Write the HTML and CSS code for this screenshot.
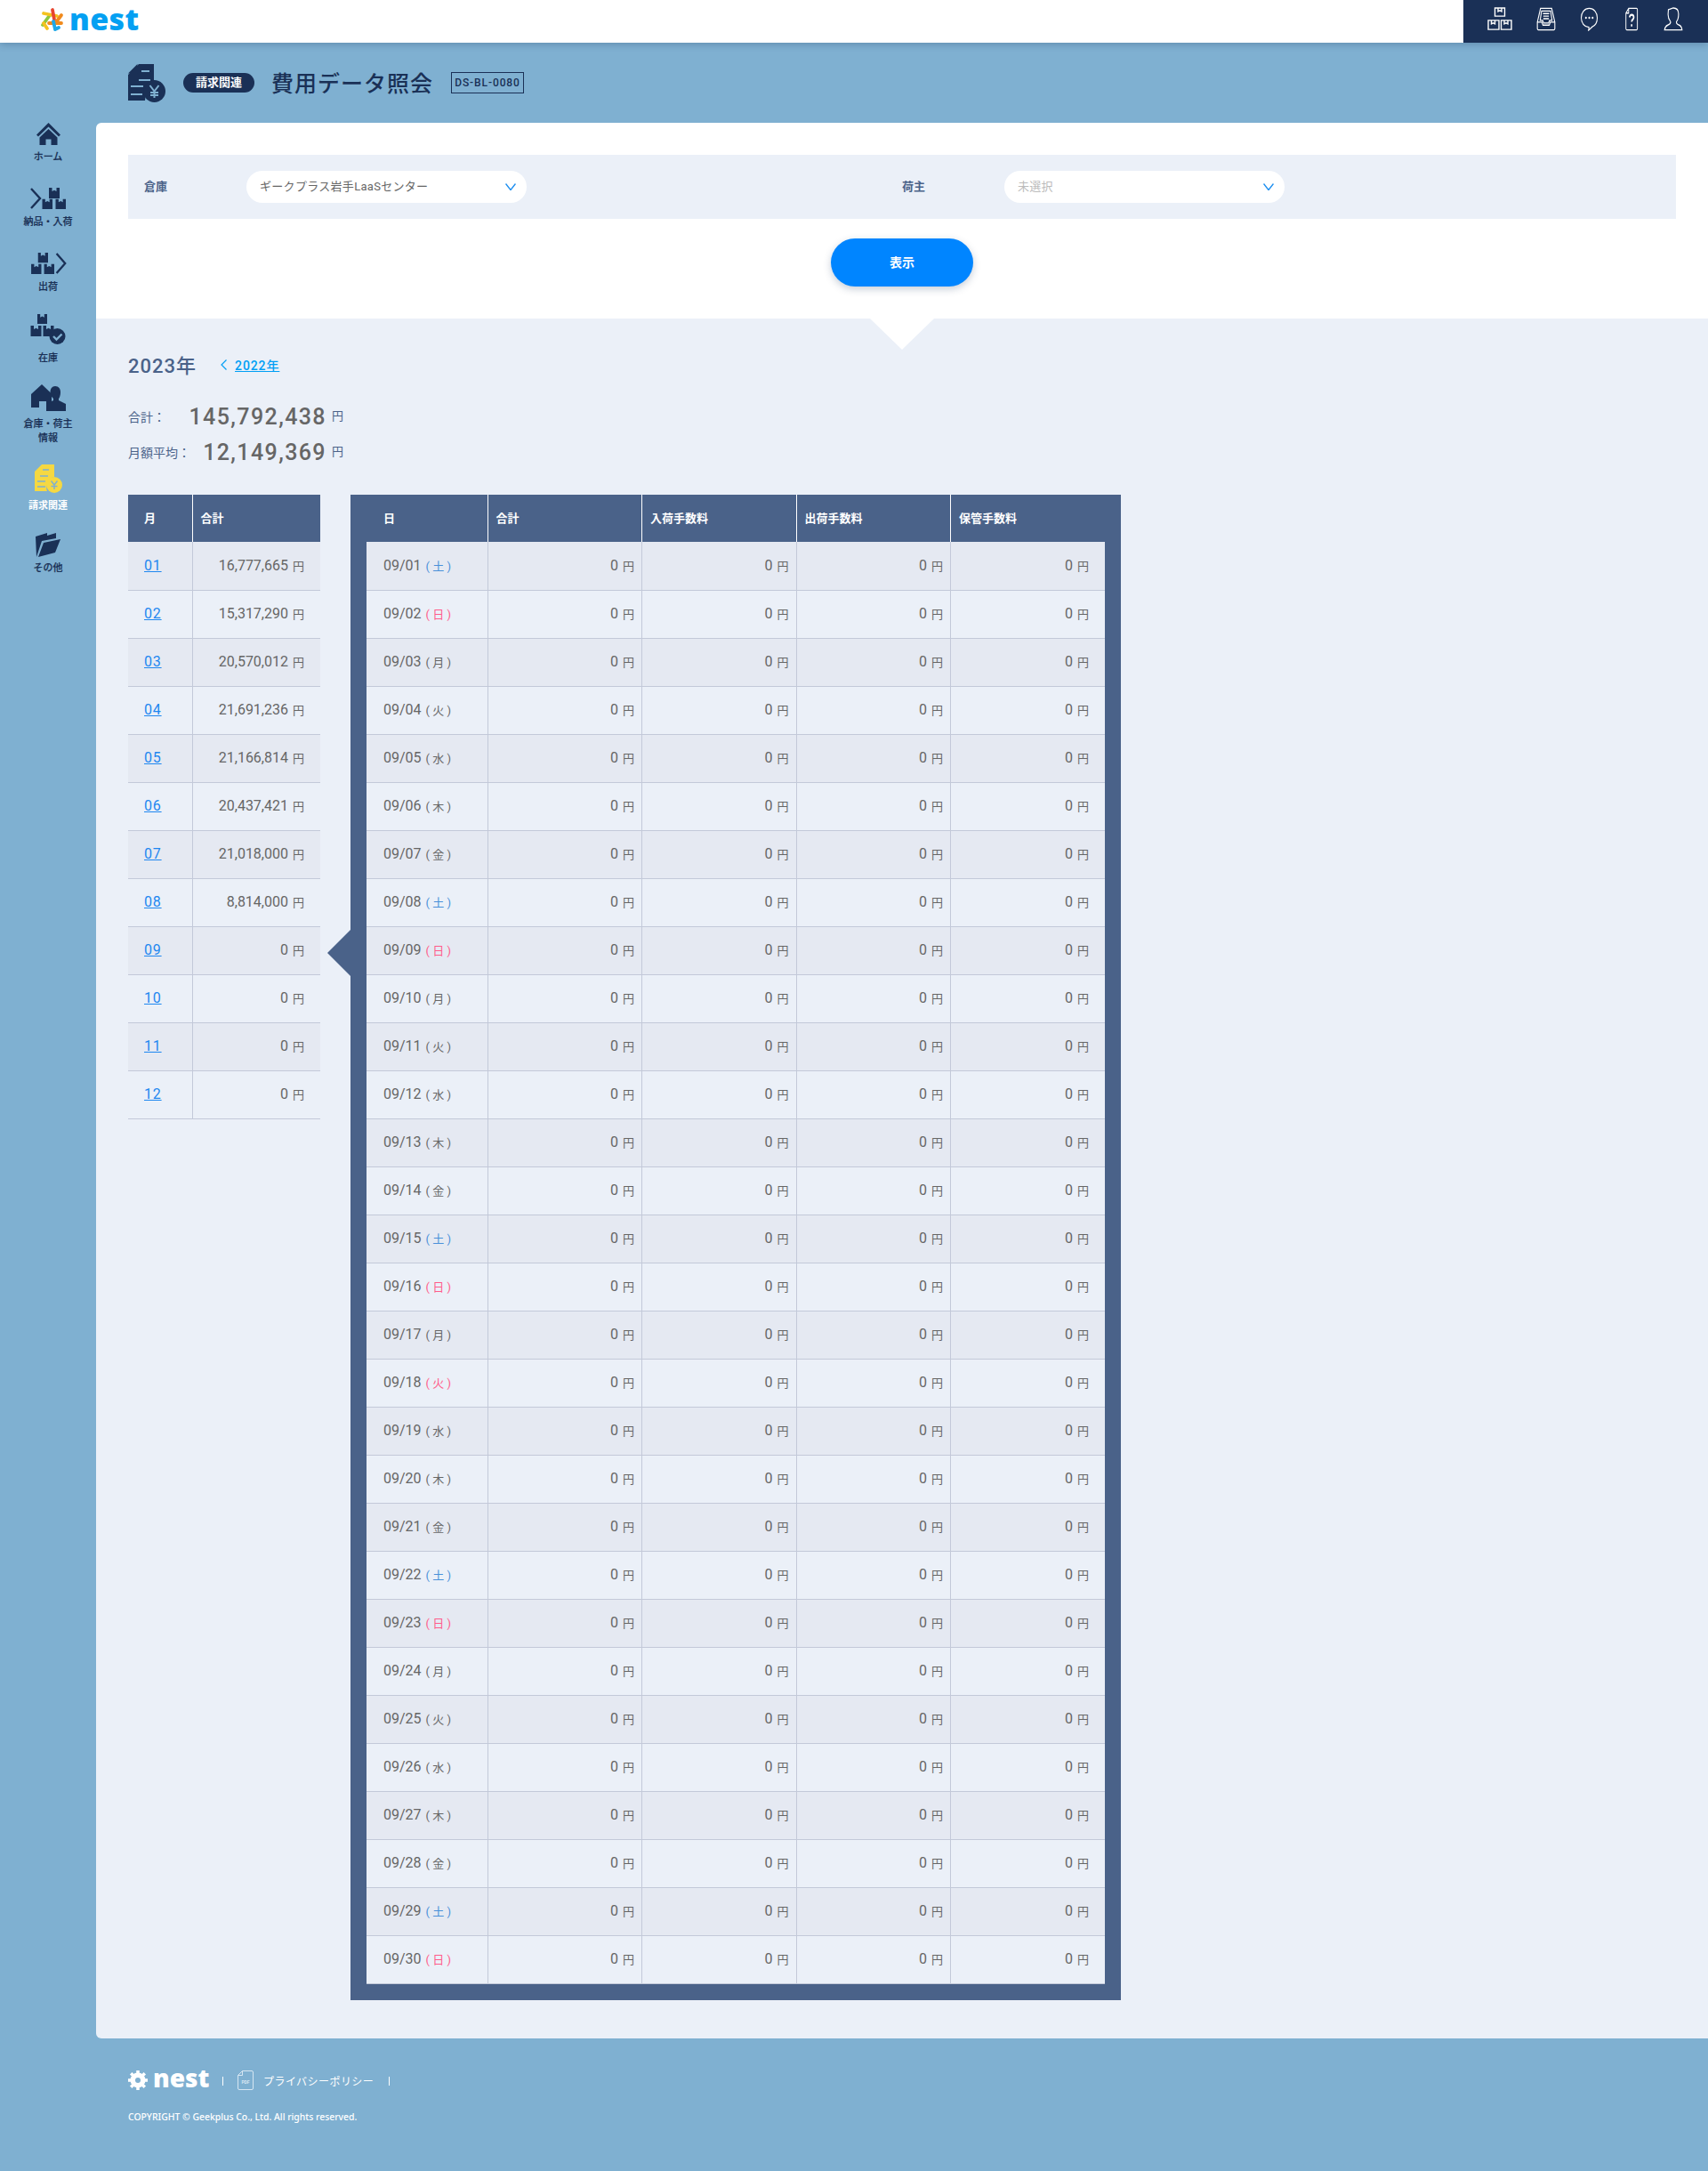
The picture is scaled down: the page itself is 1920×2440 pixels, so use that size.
FILE: index.html
```html
<!DOCTYPE html>
<html lang="ja">
<head>
<meta charset="utf-8">
<title>費用データ照会</title>
<link rel="stylesheet" href="styles.css">
</head>
<body>
<svg class="defs" width="0" height="0" aria-hidden="true">
  <defs>
    <symbol id="box" viewBox="0 0 12 12"><path d="M0 0h3.5v4l2.5-1.3L8.500 4V0H12v12H0z"/></symbol>
    <symbol id="doc" viewBox="0 0 42 43"><path d="M12 0h17v27a15 15 0 0 0-10 14H0V12z"/><path d="M0 10.500 10.500 0v10.500z"/><path class="doc-line" d="M15 8h9M12 18h13M3 25h14M3 34h13"/><circle cx="29.500" cy="30.500" r="12.500"/><path class="doc-yen" d="M24.500 24l5 6.500 5-6.500M29.500 30.500V38M25 32h9M25 35h9"/></symbol>
    <symbol id="star" viewBox="0 0 27 27"><g fill="none" stroke-width="3.800" stroke-linecap="round"><path stroke="#8cc63f" d="M3 20 11 9"/><path stroke="#f4c21f" d="M4 7l15 3M8 24l-4-6"/><path stroke="#e8452f" d="M14 3l2 11"/><path stroke="#f08a1d" d="M24 9l-6 8M24 18H10"/><path stroke="#1fa8e8" d="M17 25l-2-9M21 23l-4 2"/></g></symbol>
    <symbol id="gear" viewBox="0 0 22 22"><circle cx="11" cy="11" r="6.500" fill="none" stroke="#fff" stroke-width="4"/><path fill="none" stroke="#fff" stroke-width="3.500" d="M11 0v22M0 11h22M3.200 3.200l15.600 15.600M18.800 3.200 3.200 18.800"/><circle cx="11" cy="11" r="3" fill="#7fb0d1"/></symbol>
  </defs>
</svg>

<header class="topbar">
  <a class="brand" href="#">
    <svg class="brand-star"><use href="#star"/></svg>
    <span class="brand-text">nest</span>
  </a>
  <nav class="tools">
    <svg class="tool t1" viewBox="0 0 28 28" preserveAspectRatio="none"><path d="M8.500 1h11v9.500h-11zM12 1v4l2-1 2 1V1M1 15.500h12V26H1zM4.500 15.500v4l2-1 2 1v-4M15.500 15.500H27V26H15.500zM19 15.500v4l2-1 2 1v-4"/></svg>
    <svg class="tool t2" viewBox="0 0 28 28" preserveAspectRatio="none"><path d="M6 1.500h16l4.500 16v7.500a1.500 1.500 0 0 1-1.500 1.500H3A1.500 1.500 0 0 1 1.500 25v-7.500zM1.500 17.500H8l1.500 3.500h9l1.500-3.500h6.500M7.500 4.500h13l2 11H19l-1.500 3h-7L9 15.500H5.500zM9.500 7.500h9M10 10.500h8M10 13.500h8"/></svg>
    <svg class="tool t3" viewBox="0 0 28 28" preserveAspectRatio="none"><path d="M14 1.500c7 0 12 4.800 12 11 0 5-3 9-7.500 10.500L13 27l.500-3.600C7 23.200 2 18.500 2 12.500c0-6.200 5-11 12-11z"/><path class="tool-dots" d="M9 12.500h.100M14 12.500h.100M19 12.500h.100"/></svg>
    <svg class="tool t4" viewBox="0 0 28 28" preserveAspectRatio="none"><path d="M10 1.500h13a1.500 1.500 0 0 1 1.500 1.500v22a1.500 1.500 0 0 1-1.500 1.500H7A1.500 1.500 0 0 1 5.500 25V7zM10 1.500V7H5.500"/><path class="tool-bold" d="M11.500 12c.500-2 2-3 3.500-3 2 0 3.500 1.300 3.500 3 0 2.500-3.500 2.500-3.500 5M15 20v2.500"/></svg>
    <svg class="tool t5" viewBox="0 0 28 28" preserveAspectRatio="none"><path d="M7 3 14 1c4 0 7.500 1.500 7.500 7 0 4-1 7-3 9-.500 2 1 3 4 4 3 1 3.500 2.500 4 5.500H1.500C2 23.500 3 22 6 21c3-1 4.500-2 4-4-2-2-3.500-4.500-3.500-8.500z"/></svg>
  </nav>
</header>

<div class="layout">
  <aside class="sidebar">
    <a class="nav-item" href="#">
      <svg class="ico ico-home" viewBox="0 0 27 25"><path d="M13.500 0 27 13.500l-2 2-11.500-11-11.500 11-2-2z"/><path d="M13.500 7 23.500 16.500V25h-7v-6.500h-6V25h-7v-8.500z"/></svg>
      <span>ホーム</span>
    </a>
    <a class="nav-item" href="#">
      <svg class="ico ico-boxes" viewBox="0 0 41 24"><path class="chev" d="M1 1l10 11L1 23"/><use href="#box" x="21" y="0" width="12" height="12"/><use href="#box" x="13" y="12.500" width="12.500" height="11.500"/><use href="#box" x="28" y="12.500" width="12.500" height="11.500"/></svg>
      <span>納品・入荷</span>
    </a>
    <a class="nav-item item-out" href="#">
      <svg class="ico ico-boxes" viewBox="0 0 41 25"><path class="chev" d="M30 1l10 11.500L30 24"/><use href="#box" x="8" y="0" width="12" height="12"/><use href="#box" x="0" y="13" width="12.500" height="12"/><use href="#box" x="15" y="13" width="12.500" height="12"/></svg>
      <span>出荷</span>
    </a>
    <a class="nav-item item-stock" href="#">
      <svg class="ico ico-stock" viewBox="0 0 40 34"><use href="#box" x="7" y="0" width="13" height="11"/><use href="#box" x="0" y="13" width="13" height="12"/><use href="#box" x="14" y="13" width="13" height="12"/><circle cx="30.500" cy="25" r="9"/><path class="check" d="M26 25l3.500 3.500 6-6"/></svg>
      <span>在庫</span>
    </a>
    <a class="nav-item item-info" href="#">
      <svg class="ico ico-info" viewBox="0 0 39 30"><path d="M0 11 12 0l11 10.500V26h-6v-7H9v7H0z"/><path d="M27 2c4 0 6 3 6 7 0 3-1 6-2 7v2l8 4 0 8H17v-8l8-4v-2c-2-2-3.500-4-3.500-7 0-4 2-7 5.500-7z"/></svg>
      <span>倉庫・荷主<br>情報</span>
    </a>
    <a class="nav-item item-active" href="#">
      <svg class="ico ico-bill" viewBox="0 0 31 32"><path d="M8 0h14v14a12 12 0 0 0-8 16H0V8z"/><path class="bill-line" d="M9 6h7M6 13h9M3 19h9M3 25h9"/><circle cx="22" cy="23" r="9"/><path class="bill-yen" d="M18.500 18.500l3.500 4.500 3.500-4.500M22 23v5M18.500 24.500h7"/></svg>
      <span>請求関連</span>
    </a>
    <a class="nav-item" href="#">
      <svg class="ico ico-folder" viewBox="0 0 28 27"><path d="M0 4 13 0v3L23 0v6L7 9 1 27z"/><path d="M9 11l19-4-6 15L3 27z"/></svg>
      <span>その他</span>
    </a>
  </aside>

  <div class="page">
    <div class="title-bar">
      <svg class="title-icon"><use href="#doc"/></svg>
      <span class="badge">請求関連</span>
      <h1 class="title">費用データ照会</h1>
      <span class="code">DS-BL-0080</span>
    </div>

    <main class="panel">
      <section class="search">
        <div class="filters">
          <div class="field">
            <label class="field-label">倉庫</label>
            <div class="select"><span>ギークプラス岩手LaaSセンター</span>
              <svg class="caret" viewBox="0 0 12 8"><path d="M.500.500 6 7.500 11.500.500"/></svg></div>
          </div>
          <div class="field">
            <label class="field-label">荷主</label>
            <div class="select select-empty"><span>未選択</span>
              <svg class="caret" viewBox="0 0 12 8"><path d="M.500.500 6 7.500 11.500.500"/></svg></div>
          </div>
        </div>
        <div class="actions"><button class="btn">表示</button></div>
      </section>

      <section class="results">
        <div class="year-row">
          <h2 class="year">2023年</h2>
          <svg class="prev" viewBox="0 0 7 12"><path d="M6.500.500 1 6l5.500 5.500"/></svg>
          <a class="year-link" href="#">2022年</a>
        </div>
        <dl class="summary">
          <div class="sum-row"><dt>合計：</dt><dd><b>145,792,438</b><small>円</small></dd></div>
          <div class="sum-row"><dt>月額平均：</dt><dd><b>12,149,369</b><small>円</small></dd></div>
        </dl>

        <div class="tables">
          <table class="data months">
            <thead><tr><th class="c-month">月</th><th>合計</th></tr></thead>
            <tbody>
              <tr><td class="mon"><a href="#">01</a></td><td class="n">16,777,665<small>円</small></td></tr>
              <tr><td class="mon"><a href="#">02</a></td><td class="n">15,317,290<small>円</small></td></tr>
              <tr><td class="mon"><a href="#">03</a></td><td class="n">20,570,012<small>円</small></td></tr>
              <tr><td class="mon"><a href="#">04</a></td><td class="n">21,691,236<small>円</small></td></tr>
              <tr><td class="mon"><a href="#">05</a></td><td class="n">21,166,814<small>円</small></td></tr>
              <tr><td class="mon"><a href="#">06</a></td><td class="n">20,437,421<small>円</small></td></tr>
              <tr><td class="mon"><a href="#">07</a></td><td class="n">21,018,000<small>円</small></td></tr>
              <tr><td class="mon"><a href="#">08</a></td><td class="n">8,814,000<small>円</small></td></tr>
              <tr><td class="mon"><a href="#">09</a></td><td class="n">0<small>円</small></td></tr>
              <tr><td class="mon"><a href="#">10</a></td><td class="n">0<small>円</small></td></tr>
              <tr><td class="mon"><a href="#">11</a></td><td class="n">0<small>円</small></td></tr>
              <tr><td class="mon"><a href="#">12</a></td><td class="n">0<small>円</small></td></tr>
            </tbody>
          </table>

          <div class="days-wrap">
            <span class="pointer"></span>
            <table class="data days">
              <thead><tr><th class="c-day">日</th><th>合計</th><th>入荷手数料</th><th>出荷手数料</th><th>保管手数料</th></tr></thead>
              <tbody>
                <tr><td class="day">09/01<span class="wd sat">( 土 )</span></td><td class="n">0<small>円</small></td><td class="n">0<small>円</small></td><td class="n">0<small>円</small></td><td class="n">0<small>円</small></td></tr>
                <tr><td class="day">09/02<span class="wd hol">( 日 )</span></td><td class="n">0<small>円</small></td><td class="n">0<small>円</small></td><td class="n">0<small>円</small></td><td class="n">0<small>円</small></td></tr>
                <tr><td class="day">09/03<span class="wd">( 月 )</span></td><td class="n">0<small>円</small></td><td class="n">0<small>円</small></td><td class="n">0<small>円</small></td><td class="n">0<small>円</small></td></tr>
                <tr><td class="day">09/04<span class="wd">( 火 )</span></td><td class="n">0<small>円</small></td><td class="n">0<small>円</small></td><td class="n">0<small>円</small></td><td class="n">0<small>円</small></td></tr>
                <tr><td class="day">09/05<span class="wd">( 水 )</span></td><td class="n">0<small>円</small></td><td class="n">0<small>円</small></td><td class="n">0<small>円</small></td><td class="n">0<small>円</small></td></tr>
                <tr><td class="day">09/06<span class="wd">( 木 )</span></td><td class="n">0<small>円</small></td><td class="n">0<small>円</small></td><td class="n">0<small>円</small></td><td class="n">0<small>円</small></td></tr>
                <tr><td class="day">09/07<span class="wd">( 金 )</span></td><td class="n">0<small>円</small></td><td class="n">0<small>円</small></td><td class="n">0<small>円</small></td><td class="n">0<small>円</small></td></tr>
                <tr><td class="day">09/08<span class="wd sat">( 土 )</span></td><td class="n">0<small>円</small></td><td class="n">0<small>円</small></td><td class="n">0<small>円</small></td><td class="n">0<small>円</small></td></tr>
                <tr><td class="day">09/09<span class="wd hol">( 日 )</span></td><td class="n">0<small>円</small></td><td class="n">0<small>円</small></td><td class="n">0<small>円</small></td><td class="n">0<small>円</small></td></tr>
                <tr><td class="day">09/10<span class="wd">( 月 )</span></td><td class="n">0<small>円</small></td><td class="n">0<small>円</small></td><td class="n">0<small>円</small></td><td class="n">0<small>円</small></td></tr>
                <tr><td class="day">09/11<span class="wd">( 火 )</span></td><td class="n">0<small>円</small></td><td class="n">0<small>円</small></td><td class="n">0<small>円</small></td><td class="n">0<small>円</small></td></tr>
                <tr><td class="day">09/12<span class="wd">( 水 )</span></td><td class="n">0<small>円</small></td><td class="n">0<small>円</small></td><td class="n">0<small>円</small></td><td class="n">0<small>円</small></td></tr>
                <tr><td class="day">09/13<span class="wd">( 木 )</span></td><td class="n">0<small>円</small></td><td class="n">0<small>円</small></td><td class="n">0<small>円</small></td><td class="n">0<small>円</small></td></tr>
                <tr><td class="day">09/14<span class="wd">( 金 )</span></td><td class="n">0<small>円</small></td><td class="n">0<small>円</small></td><td class="n">0<small>円</small></td><td class="n">0<small>円</small></td></tr>
                <tr><td class="day">09/15<span class="wd sat">( 土 )</span></td><td class="n">0<small>円</small></td><td class="n">0<small>円</small></td><td class="n">0<small>円</small></td><td class="n">0<small>円</small></td></tr>
                <tr><td class="day">09/16<span class="wd hol">( 日 )</span></td><td class="n">0<small>円</small></td><td class="n">0<small>円</small></td><td class="n">0<small>円</small></td><td class="n">0<small>円</small></td></tr>
                <tr><td class="day">09/17<span class="wd">( 月 )</span></td><td class="n">0<small>円</small></td><td class="n">0<small>円</small></td><td class="n">0<small>円</small></td><td class="n">0<small>円</small></td></tr>
                <tr><td class="day">09/18<span class="wd hol">( 火 )</span></td><td class="n">0<small>円</small></td><td class="n">0<small>円</small></td><td class="n">0<small>円</small></td><td class="n">0<small>円</small></td></tr>
                <tr><td class="day">09/19<span class="wd">( 水 )</span></td><td class="n">0<small>円</small></td><td class="n">0<small>円</small></td><td class="n">0<small>円</small></td><td class="n">0<small>円</small></td></tr>
                <tr><td class="day">09/20<span class="wd">( 木 )</span></td><td class="n">0<small>円</small></td><td class="n">0<small>円</small></td><td class="n">0<small>円</small></td><td class="n">0<small>円</small></td></tr>
                <tr><td class="day">09/21<span class="wd">( 金 )</span></td><td class="n">0<small>円</small></td><td class="n">0<small>円</small></td><td class="n">0<small>円</small></td><td class="n">0<small>円</small></td></tr>
                <tr><td class="day">09/22<span class="wd sat">( 土 )</span></td><td class="n">0<small>円</small></td><td class="n">0<small>円</small></td><td class="n">0<small>円</small></td><td class="n">0<small>円</small></td></tr>
                <tr><td class="day">09/23<span class="wd hol">( 日 )</span></td><td class="n">0<small>円</small></td><td class="n">0<small>円</small></td><td class="n">0<small>円</small></td><td class="n">0<small>円</small></td></tr>
                <tr><td class="day">09/24<span class="wd">( 月 )</span></td><td class="n">0<small>円</small></td><td class="n">0<small>円</small></td><td class="n">0<small>円</small></td><td class="n">0<small>円</small></td></tr>
                <tr><td class="day">09/25<span class="wd">( 火 )</span></td><td class="n">0<small>円</small></td><td class="n">0<small>円</small></td><td class="n">0<small>円</small></td><td class="n">0<small>円</small></td></tr>
                <tr><td class="day">09/26<span class="wd">( 水 )</span></td><td class="n">0<small>円</small></td><td class="n">0<small>円</small></td><td class="n">0<small>円</small></td><td class="n">0<small>円</small></td></tr>
                <tr><td class="day">09/27<span class="wd">( 木 )</span></td><td class="n">0<small>円</small></td><td class="n">0<small>円</small></td><td class="n">0<small>円</small></td><td class="n">0<small>円</small></td></tr>
                <tr><td class="day">09/28<span class="wd">( 金 )</span></td><td class="n">0<small>円</small></td><td class="n">0<small>円</small></td><td class="n">0<small>円</small></td><td class="n">0<small>円</small></td></tr>
                <tr><td class="day">09/29<span class="wd sat">( 土 )</span></td><td class="n">0<small>円</small></td><td class="n">0<small>円</small></td><td class="n">0<small>円</small></td><td class="n">0<small>円</small></td></tr>
                <tr><td class="day">09/30<span class="wd hol">( 日 )</span></td><td class="n">0<small>円</small></td><td class="n">0<small>円</small></td><td class="n">0<small>円</small></td><td class="n">0<small>円</small></td></tr>
              </tbody>
            </table>
          </div>
        </div>
      </section>
    </main>
  </div>
</div>

<footer class="footer">
  <div class="foot-links">
    <svg class="foot-gear"><use href="#gear"/></svg>
    <span class="foot-brand">nest</span>
    <span class="foot-sep"></span>
    <svg class="foot-pdf" viewBox="0 0 18 22"><path d="M5.500.500H16a1.500 1.500 0 0 1 1.500 1.500v18a1.500 1.500 0 0 1-1.500 1.500H2A1.500 1.500 0 0 1 .500 20V5.500zM5.500.500v5h-5"/><text x="9" y="14.500" class="pdf-text">PDF</text></svg>
    <a class="foot-link" href="#">プライバシーポリシー</a>
    <span class="foot-sep foot-sep-end"></span>
  </div>
  <p class="copy">COPYRIGHT © Geekplus Co., Ltd. All rights reserved.</p>
</footer>
</body>
</html>
```

FILE: styles.css
```css
* { box-sizing: border-box; }
html, body { margin: 0; padding: 0; }
body {
  width: 1920px;
  min-height: 2440px;
  background: #7fb0d1;
  color: #666;
  font-family: Roboto, "Noto Sans CJK JP", sans-serif;
  font-size: 14px;
}
a { text-decoration: none; color: inherit; }
.defs { position: absolute; }

/* top bar */
.topbar {
  position: relative;
  height: 48px;
  background: #fff;
  display: flex;
  justify-content: space-between;
  box-shadow: 0 2px 8px rgba(30, 60, 100, .3);
}
.brand { display: flex; align-items: center; padding-left: 45px; gap: 6px; }
.brand-star { width: 27px; height: 27px; margin-top: -5px; }
.brand-text {
  font-family: "Open Sans", sans-serif;
  font-weight: 800;
  font-size: 34px;
  line-height: 48px;
  letter-spacing: .4px;
  color: #04a0f2;
  height: 48px;
  margin-top: -7px;
}
.tools {
  width: 275px;
  background: #1a3056;
  display: flex;
  align-items: center;
  padding-left: 27px;
  gap: 27px;
}
.tool { height: 27px; margin-top: -5px; fill: none; stroke: #fff; stroke-width: 1.400; flex: none; }
.t1 { width: 28px; }
.t2 { width: 22px; }
.t3 { width: 21px; }
.t4 { width: 19px; }
.t5 { width: 22px; }
.tool-dots { stroke-width: 2.600; stroke-linecap: round; }
.tool-bold { stroke-width: 2.400; }

/* layout */
.layout { display: flex; }
.sidebar { width: 108px; flex: none; padding-top: 90px; }
.nav-item {
  display: flex;
  flex-direction: column;
  align-items: center;
  height: 73px;
  color: #1a3056;
  fill: #1a3056;
  font-size: 11px;
  line-height: 16px;
  font-weight: 500;
  text-align: center;
  -webkit-text-stroke: .2px #1a3056;
}
.ico { display: block; flex: none; margin-bottom: 7px; }
.ico-home { width: 27px; height: 25px; margin-bottom: 6px; }
.ico-boxes { width: 41px; height: 24px; }
.ico-stock { width: 40px; height: 34px; margin-bottom: 8px; }
.ico-info { width: 39px; height: 30px; }
.ico-bill { width: 31px; height: 32px; }
.ico-folder { width: 28px; height: 27px; margin-bottom: 5px; }
.chev { fill: none; stroke: #1a3056; stroke-width: 2.400; }
.check { fill: none; stroke: #7fb0d1; stroke-width: 2.400; }
.item-out { height: 69px; }
.item-stock { height: 79px; }
.item-info { height: 90px; }
.item-active { height: 77px; color: #fff; fill: #f5d842; font-weight: 700; -webkit-text-stroke: 0; }
.bill-line { fill: none; stroke: #7fb0d1; stroke-width: 1.500; }
.bill-yen { fill: none; stroke: #7fb0d1; stroke-width: 1.500; }
.page { flex: 1; min-width: 0; }

/* title */
.title-bar { height: 90px; display: flex; align-items: center; padding-left: 36px; }
.title-icon { width: 42px; height: 43px; fill: #1a3056; margin-right: 20px; }
.doc-line { fill: none; stroke: #7fb0d1; stroke-width: 1.800; }
.doc-yen { fill: none; stroke: #7fb0d1; stroke-width: 2; }
.badge {
  width: 80px;
  height: 22px;
  border-radius: 11px;
  background: #1a3056;
  color: #fff;
  font-size: 13px;
  font-weight: 700;
  line-height: 21px;
  text-align: center;
  margin-right: 19px;
}
.title {
  margin: 0 21px 3px 0;
  width: 181px;
  white-space: nowrap;
  font-size: 25px;
  font-weight: 500;
  letter-spacing: 1px;
  color: #1a3056;
}
.code {
  width: 82px;
  height: 24px;
  border: 1px solid #1a3056;
  color: #1a3056;
  font-size: 12px;
  font-weight: 500;
  letter-spacing: .9px;
  line-height: 22px;
  text-align: center;
}

/* panel */
.panel { border-radius: 6px 0 0 6px; overflow: hidden; }
.search { height: 220px; background: #fff; padding: 36px 36px 0; position: relative; }
.search::after {
  content: "";
  position: absolute;
  left: 870px;
  top: 100%;
  border: solid transparent;
  border-width: 35px 36px 0;
  border-top-color: #fff;
}
.filters {
  height: 72px;
  background: #ebf0f8;
  padding: 18px 0 0 18px;
  display: grid;
  grid-template-columns: 852px 1fr;
}
.field { display: flex; align-items: center; height: 36px; }
.field-label {
  width: 115px;
  flex: none;
  color: #4a6289;
  font-size: 13px;
  font-weight: 700;
  padding-bottom: 4px;
}
.select {
  width: 315px;
  height: 36px;
  border-radius: 18px;
  background: #fff;
  display: flex;
  align-items: center;
  justify-content: space-between;
  padding: 0 12px 0 15px;
  font-size: 13px;
  letter-spacing: .3px;
  color: #666;
}
.select span { padding-bottom: 3px; }
.select-empty { color: #bbb; }
.caret { width: 12px; height: 8px; fill: none; stroke: #1e8ff0; stroke-width: 1.400; }
.actions { display: flex; justify-content: center; padding-top: 22px; }
.btn {
  width: 160px;
  height: 54px;
  border: 0;
  padding: 0 0 2px;
  border-radius: 27px;
  background: #0085ff;
  color: #fff;
  font: 700 14px Roboto, "Noto Sans CJK JP", sans-serif;
  box-shadow: 0 3px 8px rgba(30, 60, 100, .25);
}

/* results */
.results { height: 1933px; background: #ebf0f8; padding: 35px 36px 0; }
.year-row { display: flex; align-items: center; height: 34px; }
.year { margin: 0 27px 0 0; padding-bottom: 2px; font-size: 22px; font-weight: 500; color: #4a6289; letter-spacing: 1px; }
.prev { width: 7px; height: 12px; margin-right: 9px; fill: none; stroke: #009ff5; stroke-width: 1.200; }
.year-link { font-size: 14px; font-weight: 500; color: #009ff5; text-decoration: underline; letter-spacing: .9px; }
.summary { margin: 21px 0 0; width: 242px; }
.sum-row { display: flex; justify-content: space-between; align-items: center; height: 40px; }
.sum-row dt { font-size: 14px; color: #4a6289; }
.sum-row dd { margin: 0; display: flex; align-items: center; }
.sum-row b { font-size: 25px; font-weight: 500; letter-spacing: 1.400px; color: #666; }
.sum-row small { font-size: 13px; color: #4a6289; margin-left: 6px; margin-top: -3px; }

.tables { display: flex; align-items: flex-start; gap: 34px; margin-top: 28px; }
.data { border-collapse: collapse; table-layout: fixed; }
.data th {
  height: 53px;
  background: #4a6289;
  color: #fff;
  font-size: 13px;
  font-weight: 700;
  text-align: left;
  padding: 0 9px 2px;
  border-left: 1px solid #fff;
}
.data th:first-child, .data td:first-child { border-left: 0; }
.data td {
  height: 54px;
  padding: 0 18px 1px;
  border-bottom: 1px solid #c3c9d9;
  border-left: 1px solid #c3c9d9;
  font-size: 16px;
  color: #666;
}
.data tbody tr:nth-child(odd) td { background: #e5e9f2; }
.data tbody tr:nth-child(even) td { background: #ebf0f8; }
.n { text-align: right; }
.n small { font-size: 13px; margin-left: 5px; }
.months { width: 216px; }
.c-month { width: 72px; padding-left: 18px !important; border-left: 0; }
.mon a { color: #1e87f0; font-size: 16px; text-decoration: underline; letter-spacing: .8px; }
.days-wrap { position: relative; width: 866px; padding: 0 18px 18px; background: #4a6289; }
.pointer {
  position: absolute;
  left: -26px;
  top: 489px;
  border: solid transparent;
  border-width: 26px 26px 26px 0;
  border-right-color: #4a6289;
}
.days { width: 830px; }
.c-day { width: 136px; padding-left: 19px !important; }
.day { padding-left: 19px !important; padding-right: 0 !important; }
.wd { font-size: 13px; margin-left: 5px; color: #666; letter-spacing: 0; }
.sat { color: #4a90d9; }
.hol { color: #ff5c8a; }
.days .n { padding-right: 8px; }
.days .n:last-child { padding-right: 18px; }

/* footer */
.footer { height: 149px; padding: 36px 0 0 144px; color: #fff; }
.foot-links { display: flex; align-items: center; height: 22px; }
.foot-gear { width: 22px; height: 22px; }
.foot-brand {
  font-family: "Open Sans", sans-serif;
  font-weight: 800;
  font-size: 28px;
  line-height: 30px;
  height: 30px;
  margin: -7px 0 0 6px;
  width: 66px;
}
.foot-sep { width: 1px; height: 10px; background: #fff; margin: 2px 16px 0 12px; }
.foot-pdf { width: 18px; height: 22px; fill: none; stroke: #d6e6f2; stroke-width: 1; margin-right: 11px; }
.pdf-text { font-family: Roboto, sans-serif; font-size: 5px; font-weight: 700; fill: #d6e6f2; stroke: none; text-anchor: middle; }
.foot-link { font-size: 12px; letter-spacing: .45px; }
.foot-sep-end { margin-left: 17px; }
.copy { margin: 22px 0 0; font-size: 10.400px; font-weight: 500; font-family: "Noto Sans", sans-serif; line-height: 16px; }
```
